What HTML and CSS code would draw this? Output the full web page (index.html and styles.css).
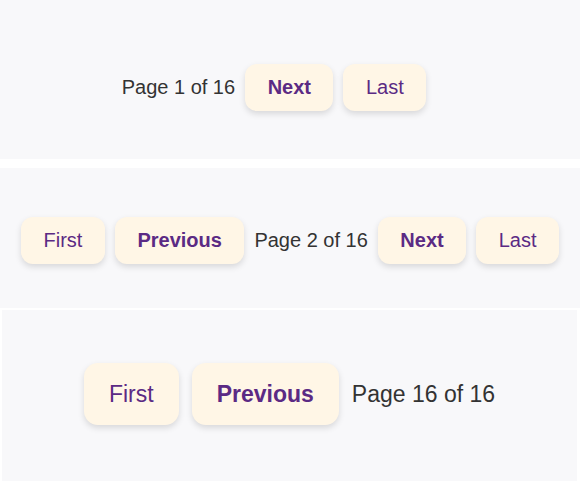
FILE: index.html
```html
<!DOCTYPE html>
<html lang="en">
<head>
<meta charset="utf-8">
<title>Pagination</title>
<link rel="stylesheet" href="styles.css">
</head>
<body>
  <section class="panel panel-first">
    <nav class="pager">
      <span class="pager-status">Page 1 of 16</span>
      <button class="pager-btn pager-btn-strong">Next</button>
      <button class="pager-btn">Last</button>
    </nav>
  </section>
  <section class="panel panel-middle">
    <nav class="pager">
      <button class="pager-btn">First</button>
      <button class="pager-btn pager-btn-strong">Previous</button>
      <span class="pager-status">Page 2 of 16</span>
      <button class="pager-btn pager-btn-strong">Next</button>
      <button class="pager-btn">Last</button>
    </nav>
  </section>
  <section class="panel panel-last">
    <nav class="pager pager-large">
      <button class="pager-btn">First</button>
      <button class="pager-btn pager-btn-strong">Previous</button>
      <span class="pager-status">Page 16 of 16</span>
    </nav>
  </section>
</body>
</html>
```

FILE: styles.css
```css
html, body {
  margin: 0;
  padding: 0;
  background: #ffffff;
}

body {
  display: flex;
  flex-direction: column;
  font-family: "Liberation Sans", Arial, sans-serif;
}

.panel {
  background: #f8f8fa;
  display: flex;
  align-items: center;
  justify-content: center;
  box-sizing: border-box;
}

.panel-first {
  height: 159px;
  padding-top: 15px;
  padding-right: 32px;
  margin-bottom: 9px;
}

.panel-middle {
  height: 140px;
  padding-top: 5px;
  margin-bottom: 2px;
}

.panel-last {
  height: 171px;
  padding-bottom: 4px;
  margin: 0 3px 0 2px;
}

.pager {
  display: flex;
  align-items: center;
  gap: 10px;
  font-size: 20px;
}

.pager-status {
  color: #333333;
  line-height: 23px;
}

.pager-btn {
  font-family: inherit;
  font-size: inherit;
  line-height: 23px;
  color: #5b2a84;
  background: #fff6e6;
  border: none;
  border-radius: 12px;
  padding: 12px 22.5px;
  box-shadow: 0 3px 6px rgba(0, 0, 0, 0.13);
  cursor: pointer;
}

.pager-btn-strong {
  font-weight: bold;
}

.pager-large {
  font-size: 23px;
  gap: 13px;
}

.pager-large .pager-status,
.pager-large .pager-btn {
  line-height: 26px;
}

.pager-large .pager-btn {
  padding: 18px 25px;
  border-radius: 14px;
}
```
